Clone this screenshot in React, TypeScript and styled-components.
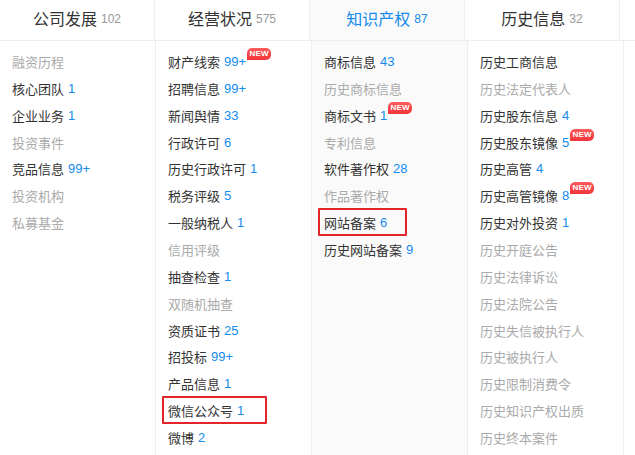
import React from "react";
import styled, { createGlobalStyle, css } from "styled-components";

const GlobalStyle = createGlobalStyle`
  html, body { margin: 0; padding: 0; background: #fff; }
  body {
    font-family: "Liberation Sans", "Noto Sans CJK SC", sans-serif;
    width: 635px;
    height: 455px;
    overflow: hidden;
  }
`;

type Item = {
  label: string;
  count?: string;
  disabled?: boolean;
  isNew?: boolean;
  mark?: number;
};

type Group = { title: string; total: string; items: Item[] };

const groups: Group[] = [
  {
    title: "公司发展",
    total: "102",
    items: [
      { label: "融资历程", disabled: true },
      { label: "核心团队", count: "1" },
      { label: "企业业务", count: "1" },
      { label: "投资事件", disabled: true },
      { label: "竞品信息", count: "99+" },
      { label: "投资机构", disabled: true },
      { label: "私募基金", disabled: true },
    ],
  },
  {
    title: "经营状况",
    total: "575",
    items: [
      { label: "财产线索", count: "99+", isNew: true },
      { label: "招聘信息", count: "99+" },
      { label: "新闻舆情", count: "33" },
      { label: "行政许可", count: "6" },
      { label: "历史行政许可", count: "1" },
      { label: "税务评级", count: "5" },
      { label: "一般纳税人", count: "1" },
      { label: "信用评级", disabled: true },
      { label: "抽查检查", count: "1" },
      { label: "双随机抽查", disabled: true },
      { label: "资质证书", count: "25" },
      { label: "招投标", count: "99+" },
      { label: "产品信息", count: "1" },
      { label: "微信公众号", count: "1", mark: 105 },
      { label: "微博", count: "2" },
    ],
  },
  {
    title: "知识产权",
    total: "87",
    items: [
      { label: "商标信息", count: "43" },
      { label: "历史商标信息", disabled: true },
      { label: "商标文书", count: "1", isNew: true },
      { label: "专利信息", disabled: true },
      { label: "软件著作权", count: "28" },
      { label: "作品著作权", disabled: true },
      { label: "网站备案", count: "6", mark: 89 },
      { label: "历史网站备案", count: "9" },
    ],
  },
  {
    title: "历史信息",
    total: "32",
    items: [
      { label: "历史工商信息" },
      { label: "历史法定代表人", disabled: true },
      { label: "历史股东信息", count: "4" },
      { label: "历史股东镜像", count: "5", isNew: true },
      { label: "历史高管", count: "4" },
      { label: "历史高管镜像", count: "8", isNew: true },
      { label: "历史对外投资", count: "1" },
      { label: "历史开庭公告", disabled: true },
      { label: "历史法律诉讼", disabled: true },
      { label: "历史法院公告", disabled: true },
      { label: "历史失信被执行人", disabled: true },
      { label: "历史被执行人", disabled: true },
      { label: "历史限制消费令", disabled: true },
      { label: "历史知识产权出质", disabled: true },
      { label: "历史终本案件", disabled: true },
    ],
  },
];

const ACTIVE = 2;

const Table = styled.div`
  display: flex;
  flex-direction: column;
  width: 635px;
  height: 455px;
`;

const HeaderRow = styled.div`
  display: flex;
  height: 40px;
  border-bottom: 1px solid #eeeeee;
`;

const Body = styled.div`
  display: flex;
  flex: 1;
`;

const cell = css<{ $active?: boolean }>`
  width: 155px;
  flex: none;
  border-right: 1px solid #eeeeee;
  background: ${(p) => (p.$active ? "#fafafa" : "#ffffff")};
`;

const HeadCell = styled.div<{ $active?: boolean }>`
  ${cell}
  display: flex;
  align-items: center;
  justify-content: center;
  padding-bottom: 5px;
  box-sizing: border-box;
  color: ${(p) => (p.$active ? "#128bed" : "#333333")};
`;

const HeadTitle = styled.span`
  font-size: 16px;
`;

const HeadCount = styled.span<{ $active?: boolean }>`
  font-size: 12px;
  margin-left: 4px;
  margin-top: 2px;
  color: ${(p) => (p.$active ? "#128bed" : "#999999")};
`;

const Column = styled.div<{ $active?: boolean }>`
  ${cell}
  display: flex;
  flex-direction: column;
  padding-top: 7px;
`;

const Row = styled.div<{ $disabled?: boolean }>`
  position: relative;
  display: flex;
  align-items: center;
  height: 26.86px;
  padding-left: 12px;
  font-size: 13px;
  white-space: nowrap;
  color: ${(p) => (p.$disabled ? "#aaaaaa" : "#333333")};
`;

const Count = styled.span`
  color: #128bed;
  margin-left: 4px;
`;

const NewBadge = styled.span`
  align-self: flex-start;
  margin-top: 0;
  margin-left: 1px;
  display: inline-flex;
  align-items: center;
  justify-content: center;
  width: 24px;
  height: 12px;
  border-radius: 5px 5px 5px 0;
  background: linear-gradient(180deg, #ff5a5a, #f2353b);
  color: #ffffff;
  font-size: 8px;
  font-weight: 700;
  letter-spacing: 0.2px;
  line-height: 1;
`;

const Mark = styled.span`
  position: absolute;
  left: 6px;
  top: -1px;
  bottom: 0;
  box-sizing: border-box;
  border: 2px solid #e3242b;
  border-radius: 1px;
  pointer-events: none;
`;

export default function App() {
  return (
    <>
      <GlobalStyle />
      <Table>
        <HeaderRow>
          {groups.map((g, i) => (
            <HeadCell key={g.title} $active={i === ACTIVE}>
              <HeadTitle>{g.title}</HeadTitle>
              <HeadCount $active={i === ACTIVE}>{g.total}</HeadCount>
            </HeadCell>
          ))}
        </HeaderRow>
        <Body>
          {groups.map((g, i) => (
            <Column key={g.title} $active={i === ACTIVE}>
              {g.items.map((it) => (
                <Row key={it.label} $disabled={it.disabled}>
                  {it.label}
                  {it.count && <Count>{it.count}</Count>}
                  {it.isNew && <NewBadge>NEW</NewBadge>}
                  {it.mark && <Mark style={{ width: it.mark }} />}
                </Row>
              ))}
            </Column>
          ))}
        </Body>
      </Table>
    </>
  );
}
